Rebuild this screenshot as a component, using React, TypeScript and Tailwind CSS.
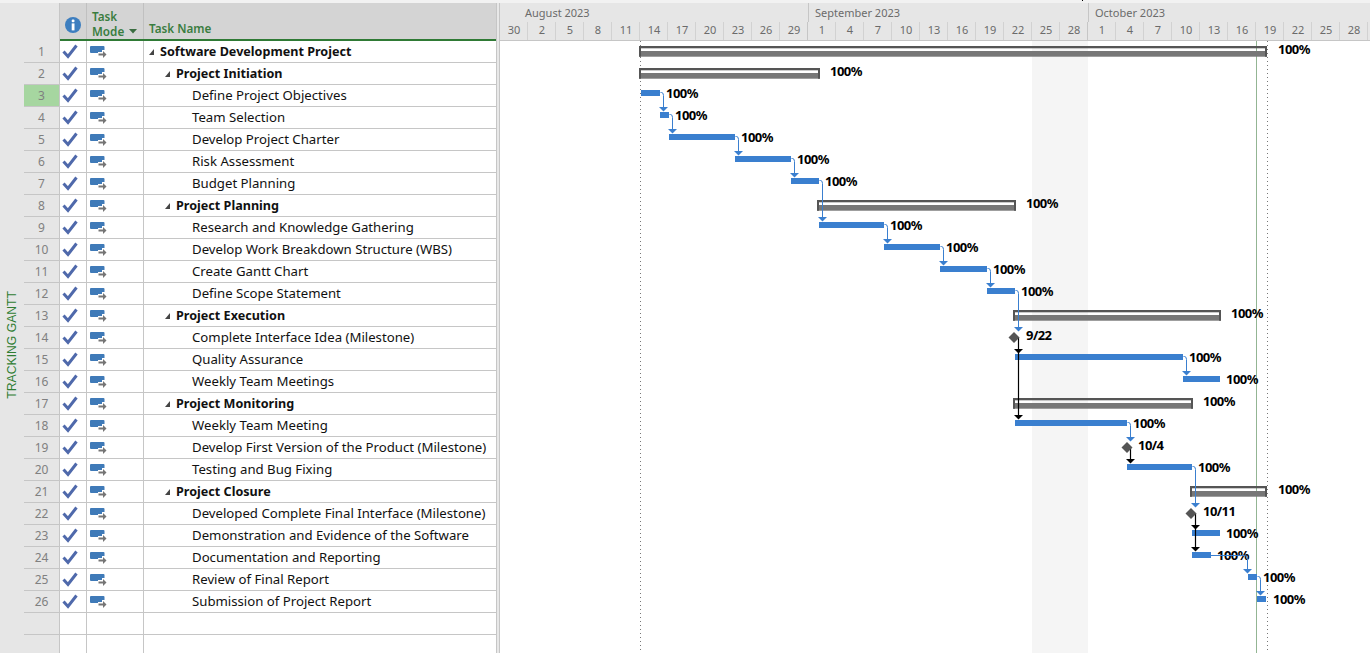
const F = '"Noto Sans", "Open Sans", sans-serif';

type T = { name: string; level: number };
const tasks: T[] = [
  { name: 'Software Development Project', level: 0 },
  { name: 'Project Initiation', level: 1 },
  { name: 'Define Project Objectives', level: 2 },
  { name: 'Team Selection', level: 2 },
  { name: 'Develop Project Charter', level: 2 },
  { name: 'Risk Assessment', level: 2 },
  { name: 'Budget Planning', level: 2 },
  { name: 'Project Planning', level: 1 },
  { name: 'Research and Knowledge Gathering', level: 2 },
  { name: 'Develop Work Breakdown Structure (WBS)', level: 2 },
  { name: 'Create Gantt Chart', level: 2 },
  { name: 'Define Scope Statement', level: 2 },
  { name: 'Project Execution', level: 1 },
  { name: 'Complete Interface Idea (Milestone)', level: 2 },
  { name: 'Quality Assurance', level: 2 },
  { name: 'Weekly Team Meetings', level: 2 },
  { name: 'Project Monitoring', level: 1 },
  { name: 'Weekly Team Meeting', level: 2 },
  { name: 'Develop First Version of the Product (Milestone)', level: 2 },
  { name: 'Testing and Bug Fixing', level: 2 },
  { name: 'Project Closure', level: 1 },
  { name: 'Developed Complete Final Interface (Milestone)', level: 2 },
  { name: 'Demonstration and Evidence of the Software', level: 2 },
  { name: 'Documentation and Reporting', level: 2 },
  { name: 'Review of Final Report', level: 2 },
  { name: 'Submission of Project Report', level: 2 },
];

const days = [30, 2, 5, 8, 11, 14, 17, 20, 23, 26, 29, 1, 4, 7, 10, 13, 16, 19, 22, 25, 28, 1, 4, 7, 10, 13, 16, 19, 22, 25, 28];

const summaries: [number, number, number, number][] = [
  [1, 639, 1267, 1278],
  [2, 639, 820, 830],
  [8, 817, 1016, 1026],
  [13, 1013, 1221, 1231],
  [17, 1013, 1193, 1203],
  [21, 1190, 1267, 1278],
];
const bars: [number, number, number, number][] = [
  [3, 641, 660, 666],
  [4, 660, 669, 675],
  [5, 669, 735, 741],
  [6, 735, 791, 797],
  [7, 791, 819, 825],
  [9, 819, 884, 890],
  [10, 884, 940, 946],
  [11, 940, 987, 993],
  [12, 987, 1015, 1021],
  [15, 1015, 1183, 1189],
  [16, 1183, 1220, 1226],
  [18, 1015, 1127, 1133],
  [20, 1127, 1192, 1198],
  [23, 1192, 1220, 1226],
  [24, 1192, 1211, 1217],
  [25, 1248, 1257, 1263],
  [26, 1257, 1266, 1273],
];
const miles: [number, number, number, string][] = [
  [14, 1014, 1026, '9/22'],
  [19, 1127, 1138, '10/4'],
  [22, 1191, 1203, '10/11'],
];
const BLUE = '#3a7fcf';
const rowY = (n: number) => 49 + 22 * (n - 1);

const links: [number, number, number][] = [
  [660, 3, 4],
  [669, 4, 5],
  [735, 5, 6],
  [791, 6, 7],
  [819, 7, 9],
  [884, 9, 10],
  [940, 10, 11],
  [987, 11, 12],
  [1015, 12, 14],
  [1183, 15, 16],
  [1127, 18, 19],
  [1192, 20, 22],
  [1257, 25, 26],
];

function Link({ x, from, to }: { x: number; from: number; to: number }) {
  const y0 = rowY(from) - 0.5;
  const top = rowY(to) - 8;
  const lx = x + 3;
  return (
    <g>
      <path d={`M${x} ${y0}h1q2 0 2 3V${top}`} fill="none" stroke={BLUE} strokeWidth="1" transform="translate(0.5 0)" />
      <path d={`M${lx - 4} ${top}h9l-4.5 4.5z`} fill={BLUE} />
    </g>
  );
}

function BlackLink({ x, y0, y1 }: { x: number; y0: number; y1: number }) {
  return (
    <g>
      <path d={`M${x + 0.5} ${y0}V${y1}`} stroke="#000" strokeWidth="1.2" fill="none" />
      <path d={`M${x - 4} ${y1 - 1}h9l-4.5 4.5z`} fill="#000" />
    </g>
  );
}

function Label({ x, r, t }: { x: number; r: number; t: string }) {
  return (
    <text x={x} y={rowY(r) + 5} fontSize="13" letterSpacing="-0.55" fontWeight="700" fill="#000">
      {t}
    </text>
  );
}

function Gantt() {
  return (
    <svg width="870" height="612" viewBox="500 41 870 612" className="block" style={{ fontFamily: F }}>
      <rect x="1032" y="41" width="56" height="612" fill="#f5f5f5" />
      <path d="M640.5 41V653M1267.5 41V653" stroke="#777" strokeWidth="1" strokeDasharray="1 3" fill="none" />
      <path d="M1256.5 41V653" stroke="#93b593" strokeWidth="1" fill="none" />

      {summaries.map(([r, a, b, l]) => {
        const y = 46 + 22 * (r - 1);
        return (
          <g key={r}>
            <rect x={a} y={y} width={b - a} height="2.3" fill="#555" />
            <rect x={a} y={y + 5} width={b - a} height="5.7" fill="#777" />
            <rect x={a} y={y} width="2" height="10.7" fill="#555" />
            <rect x={b - 2} y={y} width="2" height="10.7" fill="#555" />
            <Label x={l} r={r} t="100%" />
          </g>
        );
      })}

      {bars.map(([r, a, b, l]) => (
        <g key={r}>
          <rect x={a} y={rowY(r) - 3} width={b - a} height="6" fill={BLUE} />
          <Label x={l} r={r} t="100%" />
        </g>
      ))}

      {links.map(([x, f, t]) => (
        <Link key={`${x}-${f}`} x={x} from={f} to={t} />
      ))}

      <path d="M1211 555.5H1244.5q3 0 3 3V569" fill="none" stroke={BLUE} strokeWidth="1" />
      <path d="M1243 569h9l-4.5 4.5z" fill={BLUE} />

      <BlackLink x={1018} y0={337} y1={350} />
      <BlackLink x={1018} y0={350} y1={416} />
      <BlackLink x={1130} y0={448} y1={460} />
      <BlackLink x={1195} y0={513} y1={526} />
      <BlackLink x={1195} y0={526} y1={548} />

      {miles.map(([r, x, l, t]) => {
        const cy = rowY(r) + 2.5;
        return (
          <g key={r}>
            <path d={`M${x} ${cy - 5.5}l5.5 5.5l-5.5 5.5l-5.5-5.5z`} fill="#555" />
            <Label x={l} r={r} t={t} />
          </g>
        );
      })}
    </svg>
  );
}

function Check() {
  return (
    <svg width="16" height="15" viewBox="0 0 16 15">
      <path d="M1.5 7.5 L6 12.5 L14.5 1.5" fill="none" stroke="#4f69ab" strokeWidth="3" />
    </svg>
  );
}

function Mode() {
  return (
    <svg width="18" height="13" viewBox="0 0 18 13">
      <path d="M1 0H13.5a1 1 0 0 1 1 1V4H8V7H1a1 1 0 0 1-1-1V1a1 1 0 0 1 1-1z" fill="#3f7ab8" />
      <rect x="8" y="4" width="4" height="2" fill="#3f7ab8" />
      <path d="M8.5 8.5H14" stroke="#757575" strokeWidth="2" fill="none" />
      <path d="M13 5l3.5 3.5l-3.5 3.5z" fill="#757575" />
    </svg>
  );
}

export default function App() {
  return (
    <div className="w-[1370px] h-[653px] overflow-hidden bg-white flex flex-col" style={{ fontFamily: F }}>
      <div className="h-[3px] bg-[#f2f2f2] shrink-0 relative">
        <div className="absolute left-[1082px] top-0 w-[1px] h-[1px] bg-black" />
      </div>
      {/* header */}
      <div className="flex h-[38px] shrink-0">
        <div className="w-[60px] bg-[#e6e6e6] border-r border-[#c6c6c6]" />
        <div className="w-[436px] bg-[#d4d4d4] border-b-2 border-[#2f7a35] flex text-[11.7px] font-semibold text-[#3a7d3f] leading-[15px]">
          <div className="w-[27px] border-r border-[#c0c0c0] flex items-center justify-center pt-[7px]">
            <svg width="16" height="16" viewBox="0 0 16 16">
              <circle cx="8" cy="8" r="8" fill="#3d7ebf" />
              <rect x="6.7" y="2.6" width="2.8" height="2.6" rx="1" fill="#fff" />
              <rect x="6.7" y="6.4" width="2.8" height="7" fill="#fff" />
            </svg>
          </div>
          <div className="w-[57px] border-r border-[#c0c0c0] pl-[5px] pt-[6px] relative">
            <div>Task</div>
            <div>Mode</div>
            <svg className="absolute left-[42px] top-[26px]" width="8" height="5" viewBox="0 0 8 5">
              <path d="M0 0h8l-4 4.5z" fill="#3a6d40" />
            </svg>
          </div>
          <div className="flex-1 pl-[5px] pt-[18px]">Task Name</div>
        </div>
        <div className="w-[4px] bg-[#e8e8e8] border-x border-[#c6c6c6]" />
        <div className="flex-1 bg-[#e6e6e6] border-b border-[#c6c6c6] flex flex-col text-[11px] text-[#6b6b6b] overflow-hidden">
          <div className="flex h-[19px]">
            <div className="w-[308px] pl-[25px] pt-[2px] shrink-0">August 2023</div>
            <div className="w-[280px] pl-[6px] pt-[2px] border-l border-[#c6c6c6] shrink-0">September 2023</div>
            <div className="flex-1 pl-[6px] pt-[2px] border-l border-[#c6c6c6]">October 2023</div>
          </div>
          <div className="flex flex-1">
            {days.map((d, i) => (
              <div key={i} className={`w-[28px] shrink-0 text-center pl-[1px] border-r ${i === 10 || i === 20 ? 'border-[#c6c6c6]' : 'border-[#d2d2d2]'}`}>
                {d}
              </div>
            ))}
          </div>
        </div>
      </div>
      {/* body */}
      <div className="flex flex-1 min-h-0">
        <div className="w-[24px] bg-[#e6e6e6] flex items-center justify-center pb-[4px] shrink-0">
          <div className="[writing-mode:vertical-rl] rotate-180 text-[12.2px] text-[#2f7d32] whitespace-nowrap" style={{ fontFamily: '"Liberation Sans", sans-serif' }}>
            TRACKING GANTT
          </div>
        </div>
        <div className="w-[472px] shrink-0 flex flex-col">
          {[...tasks, null, null, null].map((t, i) => (
            <div key={i} className="h-[22px] flex shrink-0">
              <div className={`w-[36px] shrink-0 border-r border-b border-[#c6c6c6] flex items-center justify-center text-[12px] text-[#808080] ${i === 2 ? 'bg-[#a6d6a0]' : 'bg-[#e6e6e6]'}`}>
                {t ? i + 1 : ''}
              </div>
              <div className="w-[27px] shrink-0 border-r border-b border-[#c6c6c6] flex items-center pl-[2px]">
                {t && <Check />}
              </div>
              <div className="w-[57px] shrink-0 border-r border-b border-[#c6c6c6] flex items-center pl-[3px] pt-[2px]">
                {t && <Mode />}
              </div>
              <div className={`flex-1 border-b border-[#c6c6c6] flex items-center whitespace-nowrap text-[#111] ${t && t.level < 2 ? 'text-[12.6px] font-bold pt-[1px]' : 'text-[13.2px]'}`}>
                {t && (
                  <div className={`flex items-center ${t.level === 0 ? 'pl-[5px]' : t.level === 1 ? 'pl-[21px]' : 'pl-[48px]'}`}>
                    {t.level < 2 && (
                      <svg className="mr-[6px]" width="5" height="6" viewBox="0 0 5 6">
                        <path d="M5 0v6H0z" fill="#444" />
                      </svg>
                    )}
                    {t.name}
                  </div>
                )}
              </div>
            </div>
          ))}
        </div>
        <div className="w-[4px] shrink-0 bg-[#e8e8e8] border-x border-[#c6c6c6]" />
        <div className="flex-1 overflow-hidden">
          <Gantt />
        </div>
      </div>
    </div>
  );
}
